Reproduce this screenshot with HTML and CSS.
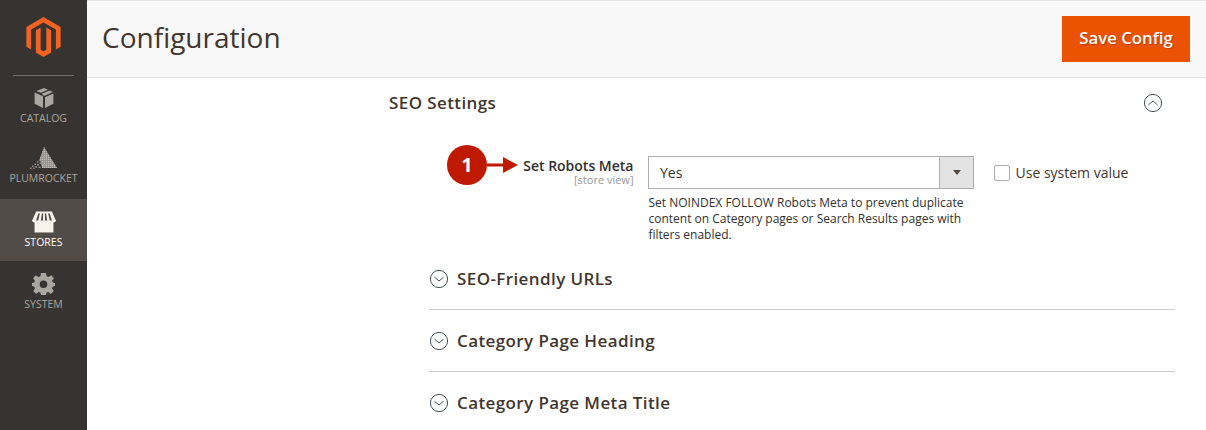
FILE: index.html
```html
<!DOCTYPE html>
<html lang="en">
<head>
<meta charset="utf-8">
<title>Configuration</title>
<link rel="stylesheet" href="styles.css">
</head>
<body>
<div class="app">
  <nav class="sidebar">
    <div class="logo">
      <svg width="35" height="40" viewBox="0 0 36 42"><path fill="#f26322" d="M18 0 L36 10.4 V31.2 L31 34 V13.2 L18 5.8 L5 13.2 V34 L0 31.2 V10.4 Z"/><path fill="#f26322" d="M18 42 L10 37.4 V13.8 L15 11 V34.4 L18 36 L21 34.4 V11 L26 13.8 V37.4 Z"/></svg>
    </div>
    <a class="nav-item nav-first">
      <svg class="nav-icon" width="20" height="21" viewBox="0 0 20 21"><path fill="#aaa69f" d="M10 0.5 L14 2.2 L6.8 5.2 L2.5 3.5 Z M15.5 3 L19 4.6 L10 8.4 L7.8 6.3 Z M0.6 5 L9 8.7 V20.5 L0.6 16.2 Z M19.4 6 V16.2 L11 20.5 V9.8 Z"/></svg>
      <span>CATALOG</span>
    </a>
    <a class="nav-item nav-tight">
      <svg class="nav-icon" width="28" height="22" viewBox="0 0 28 22"><defs><pattern id="dots" width="2" height="2" patternUnits="userSpaceOnUse"><rect width="1.4" height="1.4" fill="#c0bcb5"/></pattern></defs><path fill="#85817b" d="M14 0 L27 21 H12 L10.500 14 H9 Z"/><path fill="url(#dots)" d="M14 0 L27 21 H12 L10.500 14 H9 Z"/><path fill="#aaa69f" opacity=".8" d="M7 14h1.500v1.500H7z M9.500 15.500h1.500V17H9.500z M4.500 16.500h1.500V18H4.500z M7 17h2v1.500H7z M2 18.500h1.500V20H2z M5 19h2v1.500H5z M8.500 19.500h2v1.500h-2z M0 20.500h1.500V22H0z M3 20.500h1.500V22H3z"/></svg>
      <span>PLUMROCKET</span>
    </a>
    <a class="nav-item active">
      <svg class="nav-icon" width="26" height="21" viewBox="0 0 24 21"><path fill="#f7f3eb" d="M3 10 H21 V20.500 H3 Z"/><path fill="#f7f3eb" d="M4.500 0.500 H19.500 L23.500 9.500 Q21.500 12 19.500 10 Q17.500 12 15.500 10 Q13.500 12 12 10 Q10 12 8.500 10 Q6.500 12 4.500 10 Q2.500 12 0.500 9.500 Z"/><path fill="#514c47" d="M6.500 2.500 H8 L6.500 9 H4.500 Z M10 2.500 H11.200 L11 9 H9 Z M12.800 2.500 H14 L15 9 H13 Z M16 2.500 H17.500 L19.500 9 H17.500 Z"/></svg>
      <span>STORES</span>
    </a>
    <a class="nav-item">
      <svg class="nav-icon" width="23" height="22" viewBox="0 0 23 22"><path fill="#aaa69f" fill-rule="evenodd" d="M9 0 H14 L14.600 3.200 L16.600 4 L19.200 2.200 L22 5.200 L20 7.800 L20.800 9.600 L23 10 V13 L20.800 13.600 L20 15.400 L21.800 18 L18.800 21 L16.400 19 L14.600 19.600 L14 22 H9 L8.400 19.600 L6.600 19 L4.200 21 L1.200 18 L3 15.400 L2.200 13.600 L0 13 V10 L2.200 9.600 L3 7.800 L1 5.200 L3.800 2.200 L6.400 4 L8.400 3.200 Z M11.500 7.500 A3.800 3.800 0 1 0 11.500 15.100 A3.800 3.800 0 1 0 11.500 7.500 Z"/></svg>
      <span>SYSTEM</span>
    </a>
  </nav>
  <div class="main">
    <header class="page-header">
      <h1>Configuration</h1>
      <button class="save">Save Config</button>
    </header>
    <section class="content">
      <div class="section-title">
        <h2>SEO Settings</h2>
        <svg class="chev" width="20" height="20" viewBox="0 0 20 20"><circle cx="10" cy="10" r="8.600" fill="none" stroke="#2f3a44" stroke-width=".9"/><path d="M5.500 11.800 L10 8 L14.500 11.800" fill="none" stroke="#2f3a44" stroke-width=".9"/></svg>
      </div>
      <div class="field">
        <div class="field-label">
          <strong>Set Robots Meta</strong>
          <small>[store view]</small>
        </div>
        <div class="field-control">
          <div class="select"><span class="select-value">Yes</span><span class="select-btn"><i class="caret"></i></span></div>
          <p class="note">Set NOINDEX FOLLOW Robots Meta to prevent duplicate content on Category pages or Search Results pages with filters enabled.</p>
        </div>
        <label class="use-system"><span class="checkbox"></span>Use system value</label>
        <div class="callout">
          <span class="badge">1</span>
          <svg width="31" height="16" viewBox="0 0 31 16"><path fill="#bd1a00" d="M0 6.500 H16 V0 L31 8 L16 16 V9.500 H0 Z"/></svg>
        </div>
      </div>
      <div class="groups">
        <div class="group">
          <svg class="chev" width="20" height="20" viewBox="0 0 20 20"><circle cx="10" cy="10" r="8.600" fill="none" stroke="#2f3a44" stroke-width=".9"/><path d="M5.500 8.200 L10 12 L14.500 8.200" fill="none" stroke="#2f3a44" stroke-width=".9"/></svg>
          <h3>SEO-Friendly URLs</h3>
        </div>
        <div class="group">
          <svg class="chev" width="20" height="20" viewBox="0 0 20 20"><circle cx="10" cy="10" r="8.600" fill="none" stroke="#2f3a44" stroke-width=".9"/><path d="M5.500 8.200 L10 12 L14.500 8.200" fill="none" stroke="#2f3a44" stroke-width=".9"/></svg>
          <h3>Category Page Heading</h3>
        </div>
        <div class="group">
          <svg class="chev" width="20" height="20" viewBox="0 0 20 20"><circle cx="10" cy="10" r="8.600" fill="none" stroke="#2f3a44" stroke-width=".9"/><path d="M5.500 8.200 L10 12 L14.500 8.200" fill="none" stroke="#2f3a44" stroke-width=".9"/></svg>
          <h3>Category Page Meta Title</h3>
        </div>
      </div>
    </section>
  </div>
</div>
</body>
</html>
```

FILE: styles.css
```css
* { box-sizing: border-box; }
html, body { margin: 0; height: 430px; overflow: hidden; }
body { font-family: "Open Sans", sans-serif; color: #41362f; background: #fff; }
.app { display: flex; height: 430px; }
.sidebar { width: 87px; flex: none; background: #373330; display: flex; flex-direction: column; }
.logo { height: 76px; margin: 0 13px; border-bottom: 1px solid #736e69; display: flex; justify-content: center; padding-top: 17px; }
.nav-item { height: 62px; display: flex; flex-direction: column; align-items: center; justify-content: flex-start; padding-top: 12px; color: #aaa69f; font-size: 10.5px; line-height: 14px; }
.nav-first { height: 61px; padding-top: 11px; }
.nav-tight { padding-top: 10px; }
.nav-icon { height: 22px; margin-bottom: 2px; display: block; }
.nav-item.active { background: #514c47; color: #fff; }
.main { flex: 1; min-width: 0; display: flex; flex-direction: column; }
.page-header { height: 78px; flex: none; background: #f8f8f8; border-top: 1px solid #e3e3e3; border-bottom: 1px solid #e3e3e3; display: flex; align-items: center; justify-content: space-between; padding: 0 16px 0 15px; }
.page-header h1 { margin: 0; font-size: 28px; font-weight: 400; color: #41362f; line-height: 36px; position: relative; top: -2px; }
.save { width: 128px; height: 46px; border: 0; background: #eb5202; color: #fff; font: 600 16.8px "Open Sans", sans-serif; text-shadow: 1px 1px 1px rgba(0,0,0,.25); padding: 0 0 3px; }
.content { padding: 0 31px 0 302px; }
.section-title { display: flex; align-items: center; justify-content: space-between; height: 50px; padding-right: 12px; }
.section-title h2 { margin: -2px 0 0; font-size: 17px; font-weight: 600; letter-spacing: .4px; color: #41362f; }
.field { position: relative; display: flex; align-items: flex-start; margin-top: 28px; min-height: 92px; }
.field-label { width: 244.5px; flex: none; text-align: right; padding-top: 1px; }
.field-label strong { display: block; font-size: 14px; font-weight: 600; line-height: 17px; color: #303030; }
.field-label small { display: block; font-size: 11px; line-height: 12px; color: #999; }
.field-control { width: 326px; margin-left: 14.5px; flex: none; }
.select { height: 33px; border: 1px solid #adadad; display: flex; background: #fff; }
.select-value { flex: 1; font-size: 14px; line-height: 31px; padding-left: 11px; color: #303030; }
.select-btn { width: 34px; background: #e3e3e3; border-left: 1px solid #adadad; display: flex; align-items: center; justify-content: center; }
.caret { width: 0; height: 0; border-left: 4.5px solid transparent; border-right: 4.5px solid transparent; border-top: 5px solid #514943; }
.note { margin: 5.5px 0 0; padding-left: .5px; font-size: 12px; line-height: 16.4px; color: #303030; }
.use-system { display: flex; align-items: center; margin-left: 20px; height: 33px; font-size: 14px; color: #41362f; }
.checkbox { width: 16px; height: 16px; border: 1px solid #adadad; border-radius: 2px; background: #fff; margin-right: 5.5px; }
.callout { position: absolute; left: 58px; top: -11px; display: flex; align-items: center; }
.badge { width: 40px; height: 40px; border-radius: 50%; background: #bd1a00; color: #fff; font: 700 20px/40px "Open Sans", sans-serif; text-align: center; }
.groups { margin-left: 40px; }
.group { height: 62px; display: flex; align-items: center; border-bottom: 1px solid #cccccc; }
.group:last-child { border-bottom-color: transparent; }
.group .chev { margin-right: 8px; flex: none; }
.group h3 { margin: 0; font-size: 17px; font-weight: 600; letter-spacing: .4px; color: #41362f; }
```
